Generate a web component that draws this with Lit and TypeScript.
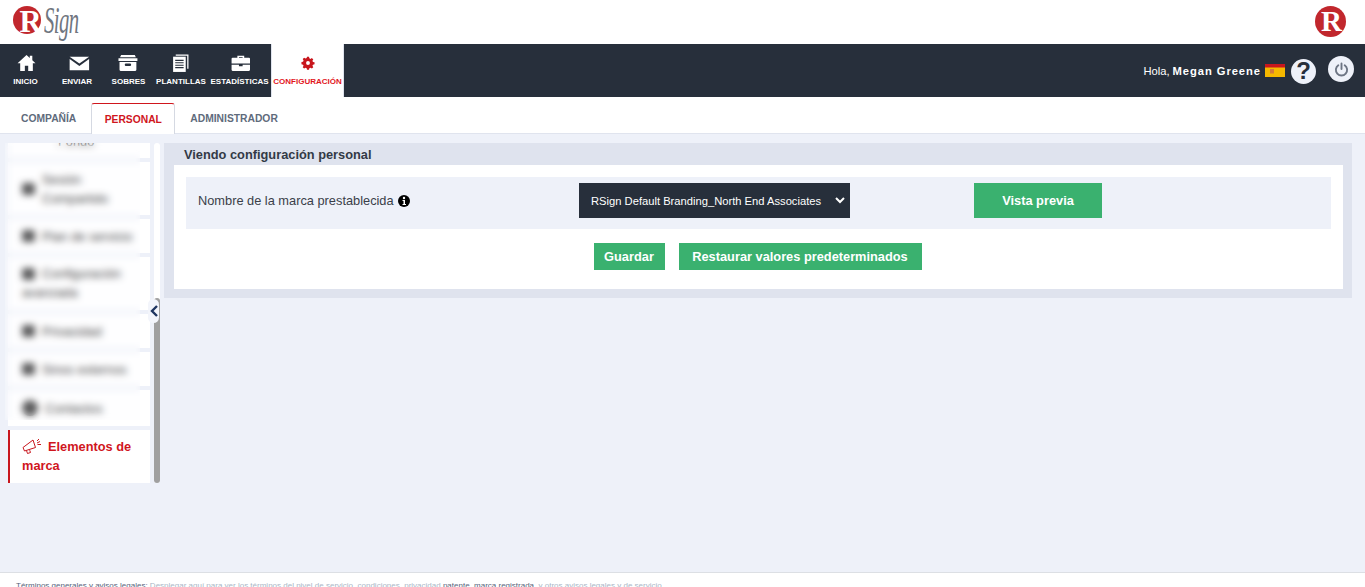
import { LitElement, html, css, svg } from "lit";
import { customElement } from "lit/decorators.js";

const rLogo = (size: number, font: number, x: number, y: number) => html`<svg class="rmark" width=${size} height=${size} viewBox="0 0 32 32" aria-hidden="true">
  <circle cx="16" cy="16" r="16" fill="#c1272d"></circle>
  <text x=${x} y=${y} text-anchor="middle" font-family="Liberation Serif, serif" font-weight="700" font-size=${font} fill="#fff">R</text>
</svg>`;

const navIcons: Record<string, unknown> = {
  home: svg`<path transform="translate(1 0)" d="M9 1 0.5 8.800h2.500V16h4.400v-5h3.200v5H15V8.800h2.500L14.500 6V1.500h-2.400v2.300z" fill="#fff"/>`,
  mail: svg`<path transform="translate(2.500 0.500)" d="M0 2h18.500L9.250 8.500z M0 4.300V15h18.500V4.300L9.250 10.800z" fill="#fff"/>`,
  box: svg`<g transform="translate(-1 0)"><path d="M3 1h13l1 2H2z M0.500 4h18v2.600h-18z M1.500 7.500h16V15a1 1 0 0 1-1 1h-14a1 1 0 0 1-1-1z" fill="#fff"/><rect x="6.500" y="9" width="6" height="2.400" rx="1" fill="#272f3b"/></g>`,
  docs: svg`<g transform="translate(1 0)"><path d="M1 2.500h12V17H1z" fill="#fff"/><path d="M3 6h8M3 8.300h8M3 10.600h8M3 12.900h8" stroke="#272f3b" stroke-width="1"/><path d="M3.500 1h11.500v13" fill="none" stroke="#fff" stroke-width="1.200"/></g>`,
  case: svg`<path transform="translate(1 0)" d="M6 3.500V1.500h6.500v2H17a1 1 0 0 1 1 1V9H0.500V4.500a1 1 0 0 1 1-1z M7.500 3.500h3.500V2.800H7.500z M0.500 10.200h7v1.500h3.500v-1.500h7V15a1 1 0 0 1-1 1h-15.500a1 1 0 0 1-1-1z" fill="#fff" fill-rule="evenodd"/>`,
  gear: svg`<path d="M7.700 1h2.600l.4 2 1.500.7 1.800-1.100 1.800 1.800-1.100 1.800.7 1.500 2 .4v2.600l-2 .4-.7 1.500 1.100 1.800-1.800 1.800-1.800-1.100-1.500.7-.4 2H7.700l-.4-2-1.500-.7-1.800 1.100-1.800-1.800 1.100-1.800-.7-1.500-2-.4V7.700l2-.4.7-1.500-1.100-1.800 1.800-1.800 1.800 1.100 1.500-.7zM9 6.500a2.500 2.500 0 1 0 0 5 2.500 2.500 0 0 0 0-5z" fill="#c8161d" fill-rule="evenodd"/>`,
};

const navItems = [
  { label: "INICIO", icon: "home", w: 51 },
  { label: "ENVIAR", icon: "mail", w: 52 },
  { label: "SOBRES", icon: "box", w: 51 },
  { label: "PLANTILLAS", icon: "docs", w: 54 },
  { label: "ESTADÍSTICAS", icon: "case", w: 63 },
];

@customElement("app-root")
export class AppRoot extends LitElement {
  static styles = css`
    :host { display: block; height: 587px; overflow: hidden; background: #eef1f9; font-family: "Liberation Sans", Arial, sans-serif; color: #333; }
    .page { height: 587px; display: flex; flex-direction: column; }
    .top { height: 44px; flex: none; background: #fff; display: flex; align-items: flex-start; justify-content: space-between; padding: 6px 19px 0 13px; box-sizing: border-box; }
    .rmark { flex: none; overflow: visible; display: block; }
    .brand { display: flex; align-items: flex-start; height: 36px; }
    .sign { font-family: "Liberation Serif", serif; font-style: italic; font-size: 37px; color: #70767f; letter-spacing: -1px; line-height: 30px; width: 34px; margin-left: 3px; white-space: nowrap; display: block; transform: scaleX(.56); transform-origin: left top; }
    .nav { height: 53px; flex: none; background: #272f3b; display: flex; align-items: stretch; justify-content: space-between; padding-right: 11px; }
    .menu { display: flex; }
    .item { display: flex; flex-direction: column; align-items: center; color: #fff; font-size: 8px; font-weight: 700; padding-top: 10px; box-sizing: border-box; white-space: nowrap; }
    .item svg { height: 18px; width: 20px; margin-bottom: 4px; overflow: visible; }
    .lbl { display: block; line-height: 11px; }
    .item.active { background: #fff; color: #e2161d; width: 73px; border: 1px solid #e0e4ee; border-bottom: 0; border-top: 0; font-size: 8px; }
    .item.active svg { height: 14px; width: 14px; margin: 2px 0 6px; }
    .user { display: flex; align-items: center; gap: 4px; color: #fff; font-size: 11.200px; }
    .user b { letter-spacing: .95px; margin-left: 3px; }
    .flag { width: 20px; height: 13px; display: block; }
    .help { width: 25px; height: 25px; border-radius: 50%; background: #eef1f9; color: #272f3b; font-weight: 700; font-size: 24px; display: flex; align-items: center; justify-content: center; margin-left: 2px; margin-top: 1px; }
    .power { width: 26px; height: 26px; border-radius: 50%; background: #eef1f9; display: flex; align-items: center; justify-content: center; margin-left: 8px; margin-top: -3px; }
    .tabs { height: 37px; flex: none; background: #fff; display: flex; align-items: flex-end; border-bottom: 1px solid #e0e4ee; box-sizing: border-box; padding-left: 6px; }
    .tab { height: 30px; display: flex; align-items: center; font-size: 10.300px; font-weight: 700; color: #5f6b7c; padding: 0 15px; box-sizing: border-box; }
    .tab.on { color: #d0161d; background: #fff; width: 84px; justify-content: center; padding: 0; border: 1px solid #d5d9e2; border-top: 1px solid #d0161d; border-bottom: 0; border-radius: 3px 3px 0 0; height: 31px; margin-bottom: -1px; }
    .body { flex: 1; min-height: 0; display: flex; align-items: flex-start; padding-top: 9px; }
    .side { width: 152px; flex: none; margin-left: 8px; position: relative; display: flex; gap: 4px; height: 340px; }
    .list { width: 142px; height: 340px; overflow: hidden; flex: none; display: flex; flex-direction: column; gap: 4px; }
    .sitem { background: #fff; flex: none; box-sizing: border-box; padding: 0 14px; display: flex; align-items: center; font-size: 12.800px; line-height: 19px; color: #111; }
    .sitem .ico { width: 13px; height: 12px; background: #333; border-radius: 2px; flex: none; margin-right: 7px; }
    .sitem.wrap { display: block; padding-top: 7px; }
    .sitem.wrap .ico { display: inline-block; vertical-align: -2px; }
    .sitem.top { height: 15px; align-items: flex-end; padding: 0 0 7px 50px; overflow: hidden; }
    .h34 { height: 34px; }
    .h36 { height: 36px; }
    .h53 { height: 53px; }
    .sitem .round { width: 16px; height: 16px; border-radius: 8px; }
    .sitem.act { color: #d0161d; font-weight: 700; border-left: 2px solid #c8161d; padding: 7px 12px; display: block; height: 53px; }
    .act svg { vertical-align: -3px; margin-right: 6px; }
    .veil { position: absolute; left: -3px; top: 0; width: 135px; height: 277px; backdrop-filter: blur(3.500px); background: rgba(248,249,253,.2); }
    .track { width: 6px; flex: none; height: 340px; background: #fff; border-radius: 3px; display: flex; flex-direction: column; justify-content: flex-end; }
    .thumb { height: 185px; background: #a0a0a0; border-radius: 3px; }
    .toggle { position: absolute; left: 140px; top: 156px; width: 11px; height: 24px; background: #f3f5fb; border-radius: 8px; display: flex; align-items: center; justify-content: center; }
    .main { margin-left: 4px; width: 1188px; flex: none; background: #dfe3ee; padding: 0 9px 9px 10px; box-sizing: border-box; }
    .title { height: 22px; font-size: 12.800px; font-weight: 700; color: #333a46; line-height: 24px; padding-left: 10px; }
    .card { background: #fff; padding: 12px 12px 19px; }
    .row { background: #eef1f9; height: 52px; padding-top: 6px; box-sizing: border-box; display: grid; grid-template-columns: 393px 395px 128px; align-items: start; }
    .name { padding-left: 12px; height: 35px; font-size: 12.800px; color: #3a3f49; display: flex; align-items: center; gap: 4px; }
    .sel { background: #272f3b; color: #fff; width: 271px; height: 35px; font-size: 11.200px; display: flex; align-items: center; justify-content: space-between; padding: 0 5px 0 12px; box-sizing: border-box; white-space: nowrap; }
    .btn { background: #3ab16f; color: #fff; font-size: 12.800px; font-weight: 700; display: flex; align-items: center; justify-content: center; box-sizing: border-box; }
    .btn.big { height: 35px; width: 128px; }
    .actions { display: flex; justify-content: center; gap: 14px; margin-top: 14px; padding-right: 2px; }
    .actions .btn { height: 27px; }
    .b1 { width: 71px; }
    .b2 { width: 243px; }
    .foot { height: 15px; flex: none; background: #fff; border-top: 1px solid #dcdfe4; box-sizing: border-box; font-size: 8px; line-height: 8px; padding: 9px 0 0 16px; color: #a9b6c6; white-space: nowrap; overflow: hidden; }
    .foot .d { color: #56627a; }
  `;

  render() {
    return html`<div class="page">
      <div class="top">
        <div class="brand">${rLogo(28, 35, 20, 29.500)}<span class="sign">Sign</span></div>
        ${rLogo(31, 30, 17, 26)}
      </div>
      <div class="nav">
        <div class="menu">
          ${navItems.map(
            (n) => html`<div class="item" style="width:${n.w}px"><svg viewBox="0 0 19 17">${navIcons[n.icon]}</svg><span class="lbl">${n.label}</span></div>`
          )}
          <div class="item active"><svg viewBox="0 0 18 18">${navIcons.gear}</svg><span class="lbl">CONFIGURACIÓN</span></div>
        </div>
        <div class="user">
          <span>Hola,<b>Megan Greene</b></span>
          <svg class="flag" viewBox="0 0 20 13"><rect width="20" height="13" fill="#f5b800"></rect><rect width="20" height="3.500" fill="#c8161d"></rect><rect x="5" y="5" width="4" height="4.500" fill="#d47a3a"></rect></svg>
          <div class="help">?</div>
          <div class="power"><svg width="15" height="15" viewBox="0 0 16 16" fill="none" stroke="#6d7584" stroke-width="2" stroke-linecap="round"><path d="M8 1.500v6"></path><path d="M4.600 3.500a6 6 0 1 0 6.800 0"></path></svg></div>
        </div>
      </div>
      <div class="tabs">
        <div class="tab">COMPAÑÍA</div>
        <div class="tab on">PERSONAL</div>
        <div class="tab">ADMINISTRADOR</div>
      </div>
      <div class="body">
        <div class="side">
          <div class="list">
            <div class="sitem top">Fondo</div>
            <div class="sitem h53"><span class="ico"></span><span>Sesión Compartido</span></div>
            <div class="sitem h34"><span class="ico"></span>Plan de servicio</div>
            <div class="sitem h53 wrap"><span class="ico"></span>Configuración avanzada</div>
            <div class="sitem h34"><span class="ico"></span>Privacidad</div>
            <div class="sitem h34"><span class="ico"></span>Sinos externos</div>
            <div class="sitem h36"><span class="ico round"></span>Contactos</div>
            <div class="sitem act"><svg width="20" height="16" viewBox="0 0 20 16" fill="none" stroke="#c8161d" stroke-width="1"><path d="M1 9.500 11 2l2.500 7.500L2.500 13z"></path><path d="M4.500 12.500l1 3 3-1-.8-2.300"></path><path d="M15 3l2-2M15.500 6.500H19M15 5l3-1.500"></path></svg>Elementos de marca</div>
          </div>
          <div class="veil"></div>
          <div class="track"><div class="thumb"></div></div>
          <div class="toggle"><svg width="8" height="12" viewBox="0 0 8 12" fill="none" stroke="#1f3560" stroke-width="2.400"><path d="M7 1 2 6l5 5"></path></svg></div>
        </div>
        <div class="main">
          <div class="title">Viendo configuración personal</div>
          <div class="card">
            <div class="row">
              <div class="name">Nombre de la marca prestablecida
                <svg width="12" height="12" viewBox="0 0 12 12"><circle cx="6" cy="6" r="6" fill="#000"></circle><circle cx="6" cy="3" r="1.200" fill="#fff"></circle><path d="M4.500 5h2.500v4h1v1H4.500V9h1V6h-1z" fill="#fff"></path></svg>
              </div>
              <div class="sel"><span>RSign Default Branding_North End Associates</span><svg width="10" height="7" viewBox="0 0 10 7" fill="none" stroke="#fff" stroke-width="2"><path d="M1 1l4 4 4-4"></path></svg></div>
              <div class="btn big">Vista previa</div>
            </div>
            <div class="actions"><div class="btn b1">Guardar</div><div class="btn b2">Restaurar valores predeterminados</div></div>
          </div>
        </div>
      </div>
      <div class="foot"><span class="d">Términos generales y avisos legales:</span> Desplegar aquí para ver los términos del nivel de servicio, condiciones, privacidad <span class="d">patente, marca registrada,</span> y otros avisos legales y de servicio.</div>
    </div>`;
  }
}
